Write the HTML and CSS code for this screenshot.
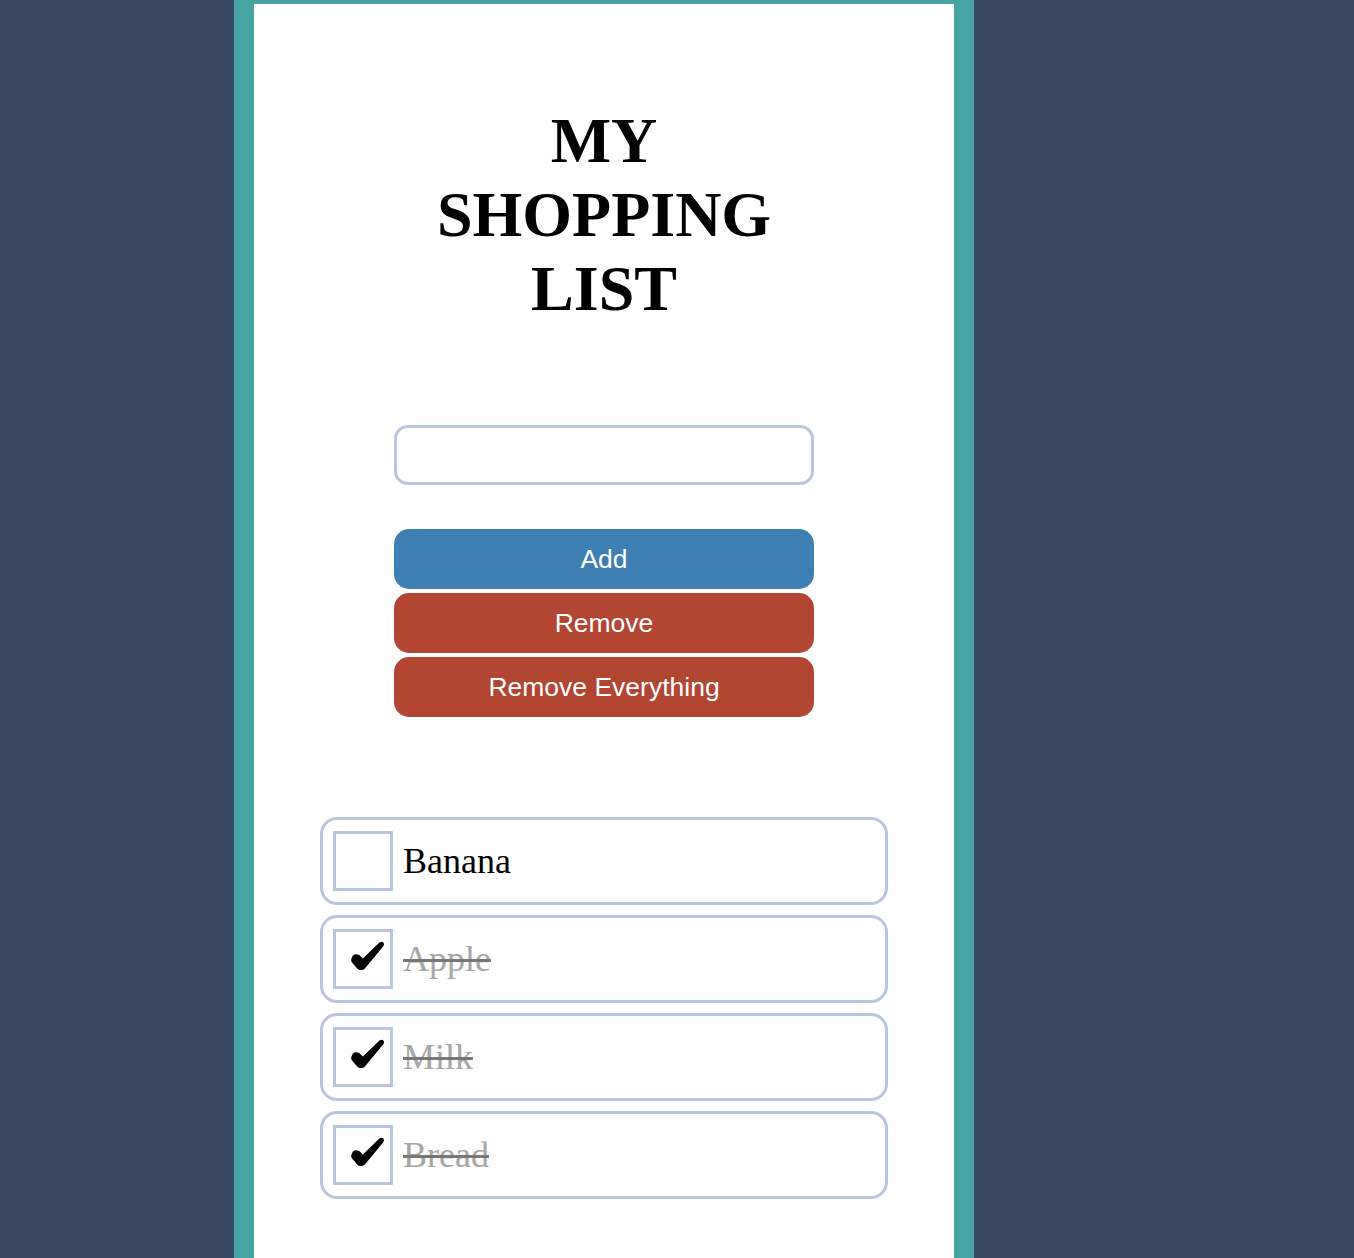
FILE: index.html
```html
<!DOCTYPE html>
<html lang="en">
<head>
<meta charset="utf-8">
<title>My Shopping List</title>
<link rel="stylesheet" href="styles.css">
</head>
<body>
  <main class="frame">
    <h1 class="title">MY SHOPPING LIST</h1>
    <div class="controls">
      <input class="item-input" type="text" aria-label="Item">
      <div class="buttons">
        <button class="btn btn-add" type="button">Add</button>
        <button class="btn btn-remove" type="button">Remove</button>
        <button class="btn btn-remove" type="button">Remove Everything</button>
      </div>
    </div>
    <ul class="list">
      <li class="item">
        <span class="check"></span>
        <span class="label">Banana</span>
      </li>
      <li class="item done">
        <span class="check"><svg class="tick" viewBox="0 0 32 28" width="33" height="29" aria-hidden="true"><path d="M0.5 17 Q2 11 8 13.5 L11.5 17 L27.5 1.5 Q31 -0.8 32 2.5 Q32.3 4.3 30.5 6 L13.5 26.5 Q9.5 30 6 26.5 L0.8 20.5 Q-0.3 18.8 0.5 17 Z"/></svg></span>
        <span class="label">Apple</span>
      </li>
      <li class="item done">
        <span class="check"><svg class="tick" viewBox="0 0 32 28" width="33" height="29" aria-hidden="true"><path d="M0.5 17 Q2 11 8 13.5 L11.5 17 L27.5 1.5 Q31 -0.8 32 2.5 Q32.3 4.3 30.5 6 L13.5 26.5 Q9.5 30 6 26.5 L0.8 20.5 Q-0.3 18.8 0.5 17 Z"/></svg></span>
        <span class="label">Milk</span>
      </li>
      <li class="item done">
        <span class="check"><svg class="tick" viewBox="0 0 32 28" width="33" height="29" aria-hidden="true"><path d="M0.5 17 Q2 11 8 13.5 L11.5 17 L27.5 1.5 Q31 -0.8 32 2.5 Q32.3 4.3 30.5 6 L13.5 26.5 Q9.5 30 6 26.5 L0.8 20.5 Q-0.3 18.8 0.5 17 Z"/></svg></span>
        <span class="label">Bread</span>
      </li>
    </ul>
  </main>
</body>
</html>
```
FILE: styles.css
```css
html, body {
  margin: 0;
  padding: 0;
}

body {
  background: #36495e;
  font-family: "Liberation Serif", "Times New Roman", serif;
}

.frame {
  box-sizing: border-box;
  width: 740px;
  min-height: 1258px;
  margin-left: 234px;
  background: #ffffff;
  border-left: 20px solid #47a3a2;
  border-right: 20px solid #47a3a2;
  border-top: 4px solid #47a3a2;
  padding: 100px 0 40px;
  display: flex;
  flex-direction: column;
  align-items: center;
}

.title {
  width: 420px;
  margin: 0;
  font-size: 64px;
  font-weight: bold;
  text-align: center;
  color: #000;
}

.controls {
  width: 420px;
  margin-top: 99px;
  display: flex;
  flex-direction: column;
  gap: 44px;
}

.item-input {
  box-sizing: border-box;
  width: 420px;
  height: 60px;
  margin: 0;
  border: 3px solid #b8c5dc;
  border-radius: 14px;
  background: #fff;
  outline: none;
  font-size: 24px;
  padding: 0 12px;
}

.buttons {
  display: flex;
  flex-direction: column;
  gap: 4px;
}

.btn {
  box-sizing: border-box;
  width: 420px;
  height: 60px;
  margin: 0;
  border: none;
  border-radius: 15px;
  color: #fff;
  font-family: "Liberation Sans", Arial, sans-serif;
  font-size: 26.5px;
  padding: 0;
}

.btn-add {
  background: #3f80b4;
}

.btn-remove {
  background: #b34533;
}

.list {
  list-style: none;
  margin: 100px 0 0;
  padding: 0;
  width: 568px;
  display: flex;
  flex-direction: column;
  gap: 10px;
}

.item {
  box-sizing: border-box;
  height: 88px;
  border: 3px solid #b8c5dc;
  border-radius: 17px;
  padding: 0 10px;
  display: flex;
  align-items: center;
  gap: 10px;
}

.check {
  box-sizing: border-box;
  flex: none;
  width: 60px;
  height: 60px;
  border: 3px solid #b8c5dc;
  padding: 9px 0 0 15px;
}

.tick {
  display: block;
  fill: #000;
}

.label {
  font-size: 36px;
  color: #000;
}

.done .label {
  color: #a6a6a6;
  text-decoration: line-through;
  text-decoration-color: #777;
}
```
